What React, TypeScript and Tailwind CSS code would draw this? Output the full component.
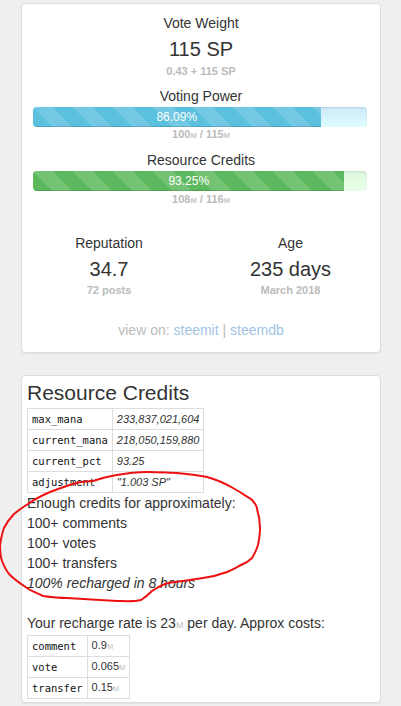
import React from 'react';

const sans = { fontFamily: '"Liberation Sans", Arial, sans-serif' };

const stripes =
  'bg-[linear-gradient(45deg,rgba(255,255,255,.15)_25%,transparent_25%,transparent_50%,rgba(255,255,255,.15)_50%,rgba(255,255,255,.15)_75%,transparent_75%,transparent)] bg-[length:40px_40px]';

const Mega: React.FC<{ children: React.ReactNode }> = ({ children }) => (
  <>
    {children}
    <span className="text-[7.5px] font-bold text-[#c8c8c8]">M</span>
  </>
);

const Bar: React.FC<{ pct: number; fill: string; rest: string }> = ({ pct, fill, rest }) => (
  <div
    className={`ml-[11px] mt-[1px] flex h-[20px] w-[334px] overflow-hidden rounded-[4px] shadow-[inset_0_1px_2px_rgba(0,0,0,0.1)] ${rest}`}
  >
    <div
      className={`h-full text-center text-[12px] leading-[20px] text-white shadow-[inset_0_-1px_0_rgba(0,0,0,0.15)] ${fill} ${stripes}`}
      style={{ width: `${pct}%` }}
    >
      {pct}%
    </div>
  </div>
);

const Stat: React.FC<{ label: string; value: string; sub: string; className?: string }> = ({
  label,
  value,
  sub,
  className = '',
}) => (
  <div className={`text-center ${className}`}>
    <div className="text-[14px] leading-[20px]">{label}</div>
    <div className="mt-[2px] text-[20px] leading-[28px]">{value}</div>
    <div className="text-[11px] font-bold leading-[14px] text-[#bbb]">{sub}</div>
  </div>
);

const mono = 'font-["DejaVu_Sans_Mono",monospace] text-[10.5px] text-[#111]';

const rcRows = [
  ['max_mana', '233,837,021,604'],
  ['current_mana', '218,050,159,880'],
  ['current_pct', '93.25'],
  ['adjustment', '"1.003 SP"'],
];

const costRows = [
  ['comment', '0.9'],
  ['vote', '0.065'],
  ['transfer', '0.15'],
];

export default function App() {
  return (
    <div className="relative min-h-[706px] bg-[#efefef] pt-[3px] text-[#333]" style={sans}>
      <div className="ml-[21px] w-[360px] rounded-[4px] border border-[#ddd] bg-white pb-[12px] pt-[9px] shadow-[0_1px_1px_rgba(0,0,0,0.05)]">
        <div className="text-center">
          <div className="text-[14px] leading-[20px]">Vote Weight</div>
          <div className="mt-[2px] text-[20px] leading-[28px]">115 SP</div>
          <div className="text-[11px] font-bold leading-[16px] text-[#bbb]">0.43 + 115 SP</div>
          <div className="mt-[7px] text-[14px] leading-[20px]">Voting Power</div>
        </div>
        <Bar pct={86.09} fill="bg-[#5bc0de]" rest="bg-gradient-to-b from-[#cbeaf8] to-[#dffcff]" />
        <div className="text-center text-[11px] font-bold leading-[14px] text-[#bbb]">
          <Mega>100</Mega> / <Mega>115</Mega>
        </div>
        <div className="mt-[7px] text-center text-[14px] leading-[20px]">Resource Credits</div>
        <div className="mt-[1px]">
          <Bar pct={93.25} fill="bg-[#5cb85c]" rest="bg-gradient-to-b from-[#def8de] to-[#e9fee9]" />
        </div>
        <div className="mt-[1px] text-center text-[11px] font-bold leading-[14px] text-[#bbb]">
          <Mega>108</Mega> / <Mega>116</Mega>
        </div>

        <div className="mt-[25px] grid grid-cols-2">
          <Stat label="Reputation" value="34.7" sub="72 posts" className="pr-[5px]" />
          <Stat label="Age" value="235 days" sub="March 2018" />
        </div>

        <div className="mt-[23px] text-center text-[14px] leading-[20px] text-[#bbb]">
          view on: <span className="text-[#9fc3e3]">steemit</span> | <span className="text-[#9fc3e3]">steemdb</span>
        </div>
      </div>

      <div className="ml-[21px] mt-[22px] w-[360px] rounded-[4px] border border-[#ddd] bg-white px-[5px] pb-[3px] pt-[5px] shadow-[0_1px_1px_rgba(0,0,0,0.05)]">
        <h3 className="text-[21px] leading-[24px]">Resource Credits</h3>
        <table className="mt-[3px] border-collapse border border-[#ddd]">
          <tbody>
            {rcRows.map(([k, v]) => (
              <tr key={k} className="h-[21px] border-t border-[#ddd]">
                <td className={`border border-[#ddd] px-[4px] leading-[19px] ${mono}`}>{k}</td>
                <td className="border border-[#ddd] px-[4px] text-[11px] italic leading-[19px]">{v}</td>
              </tr>
            ))}
          </tbody>
        </table>
        <div className="text-[14px] leading-[20px]">
          <div>Enough credits for approximately:</div>
          <div>100+ comments</div>
          <div>100+ votes</div>
          <div>100+ transfers</div>
          <div className="italic">100% recharged in 8 hours</div>
          <div className="mt-[20px]">
            Your recharge rate is 23<span className="text-[9px] text-[#bbb]">M</span> per day. Approx costs:
          </div>
        </div>
        <table className="border-collapse border border-[#ddd]">
          <tbody>
            {costRows.map(([k, v]) => (
              <tr key={k} className="h-[21px]">
                <td className={`border border-[#ddd] px-[4px] leading-[19px] ${mono}`}>{k}</td>
                <td className="border border-[#ddd] px-[4px] text-[11px] leading-[19px]">
                  {v}
                  <span className="text-[7.5px] text-[#bbb]">M</span>
                </td>
              </tr>
            ))}
          </tbody>
        </table>
      </div>

      <svg
        className="pointer-events-none absolute left-0 top-0"
        width="401"
        height="706"
        viewBox="0 0 401 706"
        fill="none"
      >
        <path
          d="M73 484 C82 481 86 482 93 481 C102 478 110 476 117 475 C128 473 138 472 147 472 C160 472 170 473 177 473 C188 474 198 475 207 477 C218 480 226 484 233 488 C240 492 246 496 251 499 C255 503 257 506 257 509 C259 515 260 521 260 528 C260 535 259 540 258 545 C256 551 254 555 252 558 C249 561 246 563 243 564 C237 567 232 570 227 572 C219 575 211 577 203 578 C196 579 190 580 183 581 C177 582 170 582 165 584 C160 586 156 588 152 591 C149 594 146 597 141 600 C132 602 124 601 117 601 C100 600 82 599 67 598 C57 598 50 597 43 596 C37 593 31 591 27 588 C21 584 14 579 10 575 C6 571 4 566 2 561 C0 555 0 550 0 545 C1 539 2 533 4 528 C7 522 10 518 14 514 C19 510 23 507 28 504 C35 499 43 495 50 492 C58 489 66 486 73 484"
          stroke="#ee1111"
          strokeWidth="2"
          strokeLinecap="round"
        />
      </svg>
    </div>
  );
}
